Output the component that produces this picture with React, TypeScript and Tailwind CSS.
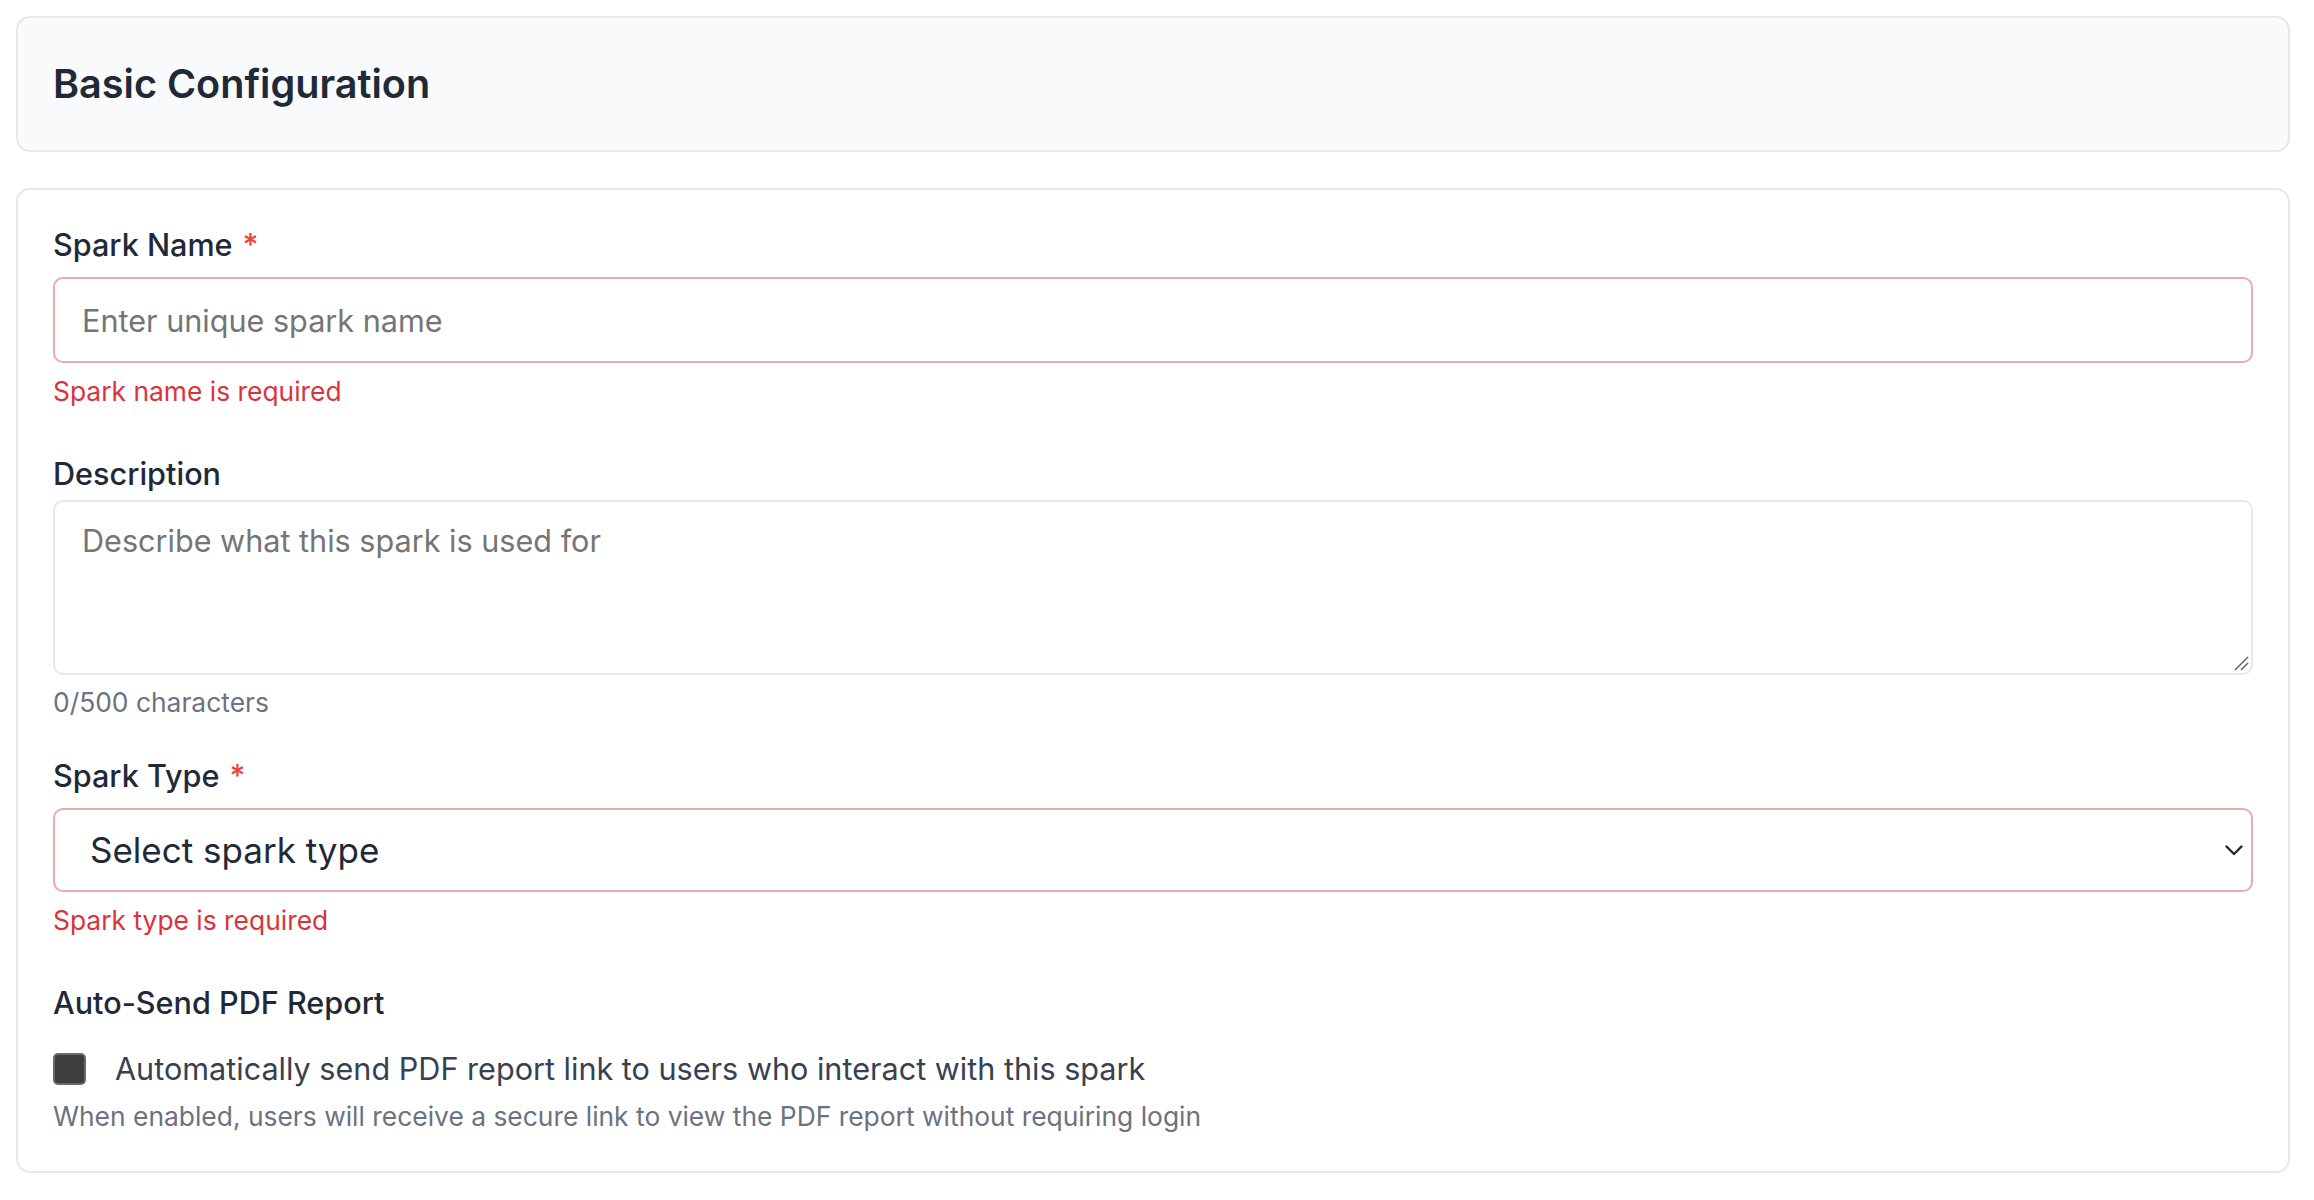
import React from "react";

function Label({ children, required }: { children: React.ReactNode; required?: boolean }) {
  return (
    <div className="text-[30.6px] leading-[40px] font-medium text-[#1f2937]">
      {children}
      {required && <span className="ml-[10px] text-[#ef4444]">*</span>}
    </div>
  );
}

export default function App() {
  return (
    <div
      className="w-full bg-white pl-[16px] pr-[24px] pt-[16px] pb-[30px]"
      style={{ fontFamily: "Inter, 'Noto Sans', sans-serif" }}
    >
      <div className="flex h-[136px] items-center rounded-[14px] border-2 border-[#e6e8eb] bg-[#f8fafb] px-[35px]">
        <h2 className="text-[39.6px] leading-[48px] font-semibold text-[#1f2937]">Basic Configuration</h2>
      </div>

      <div className="mt-[36px] rounded-[14px] border-2 border-[#e6e8eb] bg-white px-[35px] pt-[35px] pb-[37px]">
        <Label required>Spark Name</Label>
        <input
          type="text"
          placeholder="Enter unique spark name"
          className="mt-[12px] block h-[86px] w-full rounded-[10px] border-2 border-[#f0a9ab] bg-white px-[27px] text-[30.6px] text-[#1f2937] outline-none placeholder:text-[#757575]"
        />
        <div className="mt-[10px] text-[26.4px] leading-[36px] text-[#d9343c]">Spark name is required</div>

        <div className="mt-[45px]">
          <Label>Description</Label>
        </div>
        <div className="relative mt-[6px]">
          <textarea
            placeholder="Describe what this spark is used for"
            className="block h-[175px] w-full resize-none rounded-[10px] border-2 border-[#e6e8eb] bg-white px-[27px] pt-[19px] text-[30.6px] leading-[40px] text-[#1f2937] outline-none placeholder:text-[#757575]"
          />
          <svg
            className="pointer-events-none absolute right-[4px] bottom-[4px]"
            width="15"
            height="15"
            viewBox="0 0 15 15"
          >
            <line x1="1" y1="14" x2="14" y2="1" stroke="#6b6b6b" strokeWidth="1.6" />
            <line x1="7" y1="14" x2="14" y2="7" stroke="#6b6b6b" strokeWidth="1.6" />
          </svg>
        </div>
        <div className="mt-[9px] text-[26.4px] leading-[36px] text-[#6b7280]">0/500 characters</div>

        <div className="mt-[36px]">
          <Label required>Spark Type</Label>
        </div>
        <div className="mt-[12px] flex h-[84px] w-full items-center justify-between rounded-[10px] border-2 border-[#f0a9ab] bg-white pl-[35px] pr-[8px]">
          <span className="text-[35px] leading-[44px] text-[#1f2937]">Select spark type</span>
          <svg width="18" height="11" viewBox="0 0 18 11" fill="none">
            <polyline points="1.5,1.5 9,9 16.5,1.5" stroke="#1f2937" strokeWidth="2.4" strokeLinecap="round" strokeLinejoin="round" />
          </svg>
        </div>
        <div className="mt-[10px] text-[26.4px] leading-[36px] text-[#d9343c]">Spark type is required</div>

        <div className="mt-[45px]">
          <Label>Auto-Send PDF Report</Label>
        </div>
        <div className="mt-[26px] flex h-[40px] items-center">
          <div className="h-[32px] w-[33px] shrink-0 rounded-[5px] border-2 border-[#6a6a6a] bg-[#3d3d3d]" />
          <span className="ml-[29px] text-[30.6px] leading-[40px] text-[#374151]">
            Automatically send PDF report link to users who interact with this spark
          </span>
        </div>
        <div className="mt-[9px] text-[26.4px] leading-[36px] text-[#6b7280]">
          When enabled, users will receive a secure link to view the PDF report without requiring login
        </div>
      </div>
    </div>
  );
}
